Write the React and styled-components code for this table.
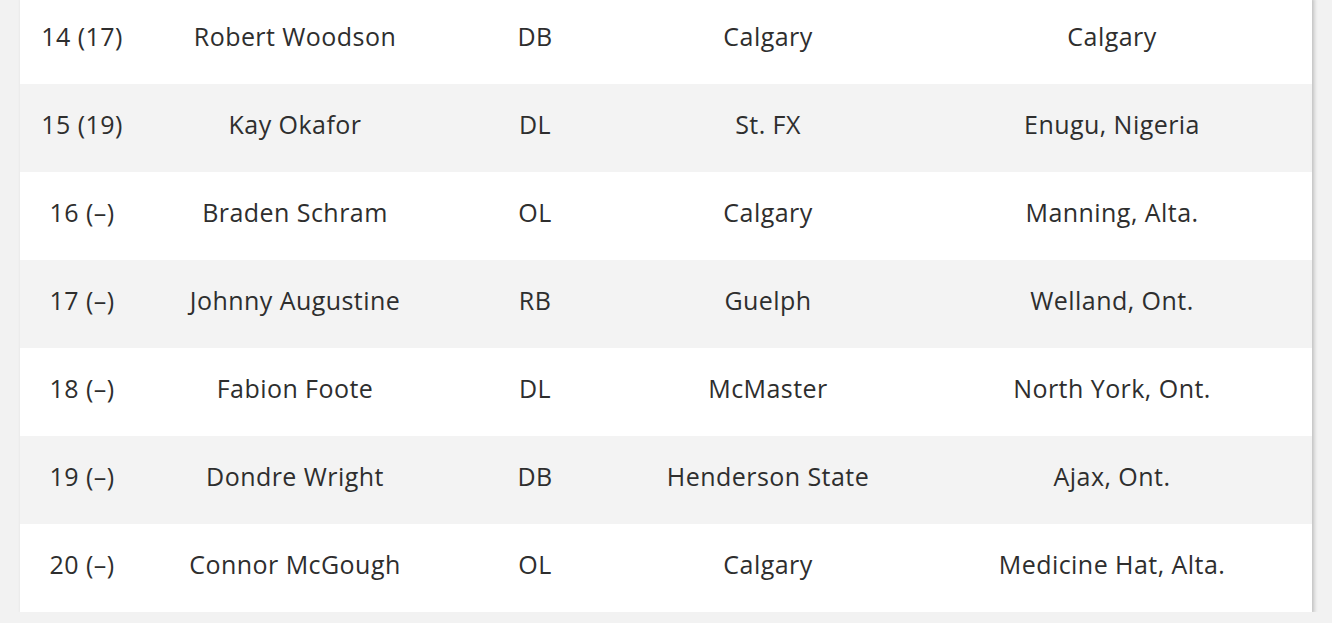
import React from "react";
import styled, { createGlobalStyle } from "styled-components";

const Global = createGlobalStyle`
  html, body { margin: 0; padding: 0; background: #f2f2f2; }
  body { font-family: "Open Sans", "Noto Sans", sans-serif; overflow: hidden; }
`;

const Page = styled.div`
  padding: 0 20px;
  width: 1292px;
`;

const Table = styled.table`
  width: 1292px;
  margin-top: -4px;
  border-collapse: collapse;
  table-layout: fixed;
  background: #fff;
  box-shadow: 2px 2px 4px rgba(0, 0, 0, 0.22);
`;

const Row = styled.tr`
  height: 88px;
  background: ${(p) => (p.$striped ? "#f3f3f3" : "#ffffff")};
`;

const Cell = styled.td`
  padding: 0 0 8px 0;
  text-align: center;
  vertical-align: middle;
  font-size: 25px;
  line-height: 34px;
  color: #2e2e2e;
  letter-spacing: 0.45px;
`;

const widths = [124, 302, 178, 288, 400];

const rows = [
  ["14 (17)", "Robert Woodson", "DB", "Calgary", "Calgary"],
  ["15 (19)", "Kay Okafor", "DL", "St. FX", "Enugu, Nigeria"],
  ["16 (–)", "Braden Schram", "OL", "Calgary", "Manning, Alta."],
  ["17 (–)", "Johnny Augustine", "RB", "Guelph", "Welland, Ont."],
  ["18 (–)", "Fabion Foote", "DL", "McMaster", "North York, Ont."],
  ["19 (–)", "Dondre Wright", "DB", "Henderson State", "Ajax, Ont."],
  ["20 (–)", "Connor McGough", "OL", "Calgary", "Medicine Hat, Alta."],
];

export default function App() {
  return (
    <>
      <Global />
      <Page>
        <Table>
          <colgroup>
            {widths.map((w, i) => (
              <col key={i} style={{ width: w }} />
            ))}
          </colgroup>
          <tbody>
            {rows.map((r, i) => (
              <Row key={i} $striped={i % 2 === 1}>
                {r.map((c, j) => (
                  <Cell key={j}>{c}</Cell>
                ))}
              </Row>
            ))}
          </tbody>
        </Table>
      </Page>
    </>
  );
}
